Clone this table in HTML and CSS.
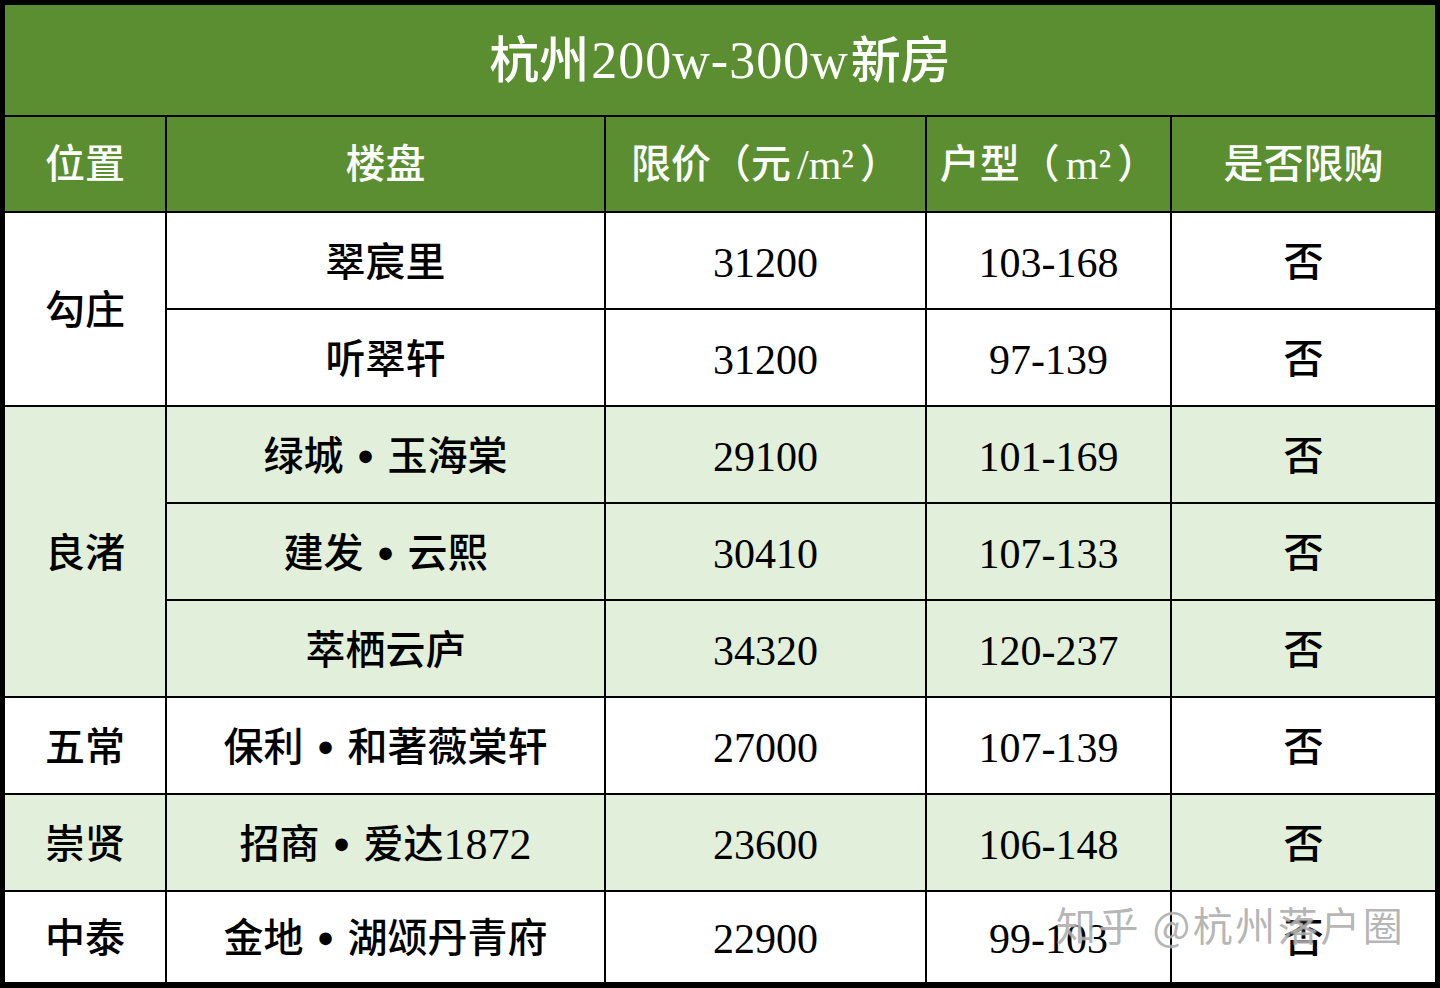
FILE: index.html
```html
<!DOCTYPE html>
<html lang="zh-CN">
<head>
<meta charset="utf-8">
<title>杭州200w-300w新房</title>
<link rel="stylesheet" href="styles.css">
</head>
<body>
<div class="sheet">
  <div class="cell title">杭州<span class="tnum">200w-300w</span>新房</div>

  <div class="cell head">位置</div>
  <div class="cell head">楼盘</div>
  <div class="cell head">限价（元<span class="unit">/m²</span>）</div>
  <div class="cell head">户型（<span class="unit">m²</span>）</div>
  <div class="cell head">是否限购</div>

  <div class="cell white span2">勾庄</div>
  <div class="cell white">翠宸里</div>
  <div class="cell white num">31200</div>
  <div class="cell white num">103-168</div>
  <div class="cell white">否</div>

  <div class="cell white">听翠轩</div>
  <div class="cell white num">31200</div>
  <div class="cell white num">97-139</div>
  <div class="cell white">否</div>

  <div class="cell light span3">良渚</div>
  <div class="cell light">绿城<span class="dot">•</span>玉海棠</div>
  <div class="cell light num">29100</div>
  <div class="cell light num">101-169</div>
  <div class="cell light">否</div>

  <div class="cell light">建发<span class="dot">•</span>云熙</div>
  <div class="cell light num">30410</div>
  <div class="cell light num">107-133</div>
  <div class="cell light">否</div>

  <div class="cell light">萃栖云庐</div>
  <div class="cell light num">34320</div>
  <div class="cell light num">120-237</div>
  <div class="cell light">否</div>

  <div class="cell white">五常</div>
  <div class="cell white">保利<span class="dot">•</span>和著薇棠轩</div>
  <div class="cell white num">27000</div>
  <div class="cell white num">107-139</div>
  <div class="cell white">否</div>

  <div class="cell light">崇贤</div>
  <div class="cell light">招商<span class="dot">•</span>爱达<span class="inum">1872</span></div>
  <div class="cell light num">23600</div>
  <div class="cell light num">106-148</div>
  <div class="cell light">否</div>

  <div class="cell white">中泰</div>
  <div class="cell white">金地<span class="dot">•</span>湖颂丹青府</div>
  <div class="cell white num">22900</div>
  <div class="cell white num">99-103</div>
  <div class="cell white">否</div>

  <div class="watermark">知乎 @杭州落户圈</div>
</div>
</body>
</html>
```

FILE: styles.css
```css
html, body {
  margin: 0;
  padding: 0;
  background: #000;
}

.sheet {
  position: relative;
  width: 1440px;
  height: 988px;
  box-sizing: border-box;
  padding: 5px 5px 6px 5px;
  background: #000;
  display: grid;
  grid-template-columns: 160px 437px 319px 243px 263px;
  grid-template-rows: 110px 94px repeat(7, 95px) 90px;
  column-gap: 2px;
  row-gap: 2px;
  font-family: "Liberation Serif", "Noto Sans CJK SC", serif;
  font-size: 40px;
  font-weight: 500;
  color: #000;
}

.cell {
  display: flex;
  align-items: center;
  justify-content: center;
  white-space: nowrap;
  line-height: 1;
  padding-top: 4px;
  box-sizing: border-box;
}

.title {
  grid-column: 1 / -1;
  background: #5a8e31;
  color: #fff;
  font-size: 50px;
  padding-top: 2px;
}

.tnum {
  font-weight: 400;
  font-size: 52px;
  letter-spacing: 1px;
  margin: 0 2px;
}

.head {
  background: #5a8e31;
  color: #fff;
  font-size: 40px;
  padding-top: 2px;
}

.unit {
  font-weight: 400;
  font-size: 42px;
  margin: 0 6px;
}

.white {
  background: #fff;
}

.light {
  background: #e2efda;
}

.span2 {
  grid-row: span 2;
}

.span3 {
  grid-row: span 3;
}

.num {
  font-size: 42px;
  font-weight: 400;
}

.inum {
  font-size: 44px;
  font-weight: 400;
}

.dot {
  display: inline-block;
  width: 44px;
  text-align: center;
  font-size: 46px;
  font-weight: 700;
}

.watermark {
  position: absolute;
  left: 1056px;
  top: 904px;
  font-family: "Noto Sans CJK SC", sans-serif;
  font-size: 40px;
  font-weight: 400;
  color: rgba(150, 150, 150, 0.7);
  text-shadow: 0 0 2px rgba(255, 255, 255, 0.9);
  letter-spacing: 2.5px;
  white-space: nowrap;
  line-height: 1;
  pointer-events: none;
}
```
